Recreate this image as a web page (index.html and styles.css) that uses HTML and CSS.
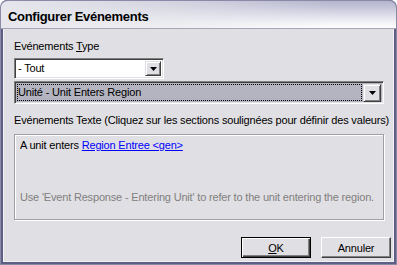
FILE: index.html
```html
<!DOCTYPE html>
<html>
<head>
<meta charset="utf-8">
<link rel="stylesheet" href="styles.css">
</head>
<body>
<div class="window">
  <div class="titlebar"><span class="title">Configurer Evénements</span></div>
  <div class="client">
    <div class="label label-type">Evénements <u>T</u>ype</div>
    <div class="combo combo-type">
      <span class="combo-text">- Tout</span>
      <span class="drop"><svg width="7" height="4" viewBox="0 0 7 4"><path d="M0 0h7l-3.5 4z" fill="#000"/></svg></span>
    </div>
    <div class="combo combo-event">
      <span class="combo-text focus">Unité - Unit Enters Region</span>
      <span class="drop"><svg width="7" height="4" viewBox="0 0 7 4"><path d="M0 0h7l-3.5 4z" fill="#000"/></svg></span>
    </div>
    <div class="label label-texte">Evénements Texte (Cliquez sur les sections soulignées pour définir des valeurs)</div>
    <div class="textbox">
      <div class="line">A unit enters <span class="link">Region Entree &lt;gen&gt;</span></div>
      <div class="hint">Use 'Event Response - Entering Unit' to refer to the unit entering the region.</div>
    </div>
    <div class="buttons">
      <button class="btn btn-default"><u>O</u>K</button>
      <button class="btn">Annuler</button>
    </div>
  </div>
</div>
</body>
</html>
```

FILE: styles.css
```css
html, body {
  margin: 0;
  padding: 0;
  background: #ffffff;
}
body {
  font-family: "Liberation Sans", Arial, sans-serif;
  font-size: 11px;
  letter-spacing: -0.18px;
  line-height: 13px;
  color: #000;
}
.window {
  width: 397px;
  height: 265px;
  box-sizing: border-box;
  display: flex;
  flex-direction: column;
  background: #5f5f86;
  border: 1px solid #8a8aa8;
  border-top: none;
  border-radius: 7px 7px 0 0;
  overflow: hidden;
}
.titlebar {
  height: 29px;
  box-sizing: border-box;
  padding: 8px 0 0 7px;
  border-top: 1px solid #8a8aa8;
  border-bottom: 1px solid #a6a6b8;
  border-radius: 7px 7px 0 0;
  background:
    linear-gradient(to right, rgba(230,230,236,1) 0%, rgba(230,230,236,0.6) 45%, rgba(230,230,236,0) 85%),
    linear-gradient(to bottom, #b4b4cc 0%, #c6c6da 25%, #e4e4ee 60%, #fafafc 90%, #ffffff 100%);
  flex: none;
}
.title {
  font-weight: bold;
  font-size: 13px;
  letter-spacing: -0.3px;
  line-height: 15px;
  color: #000;
}
.client {
  flex: 1;
  margin: 0 2px 2px;
  background: #e0dfe3;
  border: 1px solid #f2f2f6;
  border-top: none;
  padding: 0 9px 0 10px;
  display: flex;
  flex-direction: column;
}
.label-type {
  margin-top: 11px;
}
.combo {
  display: flex;
  align-items: center;
  box-sizing: border-box;
  border: 1px solid;
  border-color: #808080 #ffffff #ffffff #808080;
  box-shadow: inset 1px 1px 0 #404040, inset -1px -1px 0 #e0dfe3;
}
.combo-type {
  width: 150px;
  height: 21px;
  margin-top: 5px;
  background: #ffffff;
  padding: 2px 2px 2px 2px;
}
.combo-event {
  height: 23px;
  margin-top: 2px;
  background: #b3b4bf;
  padding: 2px 2px 2px 2px;
}
.combo-text {
  flex: 1;
  padding-left: 1px;
  align-self: stretch;
  display: flex;
  align-items: center;
  box-sizing: border-box;
}
.combo-text.focus {
  outline: 1px dotted #000;
  outline-offset: -1px;
  margin-right: 1px;
}
.drop {
  flex: none;
  width: 16px;
  height: 15px;
  box-sizing: border-box;
  background: #e0dfe3;
  border: 1px solid;
  border-color: #e0dfe3 #404040 #404040 #e0dfe3;
  box-shadow: inset 1px 1px 0 #ffffff, inset -1px -1px 0 #808080;
  display: flex;
  align-items: center;
  justify-content: center;
}
.combo-event .drop {
  width: 18px;
  height: 18px;
}
.label-texte {
  margin-top: 10px;
  white-space: nowrap;
}
.textbox {
  margin-top: 7px;
  height: 86px;
  box-sizing: border-box;
  border: 1px solid #a0a0a4;
  box-shadow: inset 1px 1px 0 #ffffff, 1px 1px 0 #ffffff;
  padding: 4px 5px;
}
.link {
  color: #0000ff;
  text-decoration: underline;
}
.hint {
  margin-top: 39px;
  color: #808080;
  white-space: nowrap;
}
.buttons {
  margin-top: 17px;
  margin-right: -7px;
  display: flex;
  justify-content: flex-end;
  gap: 10px;
}
.btn {
  width: 70px;
  height: 21px;
  box-sizing: border-box;
  font-family: inherit;
  font-size: 11px;
  letter-spacing: inherit;
  color: #000;
  background: #e0dfe3;
  border: 1px solid;
  border-color: #ffffff #404040 #404040 #ffffff;
  box-shadow: inset -1px -1px 0 #808080;
  padding: 0;
  margin: 0;
}
.btn-default {
  border: 1px solid #000;
  box-shadow: inset 1px 1px 0 #ffffff, inset -1px -1px 0 #404040, inset -2px -2px 0 #808080;
}
```
